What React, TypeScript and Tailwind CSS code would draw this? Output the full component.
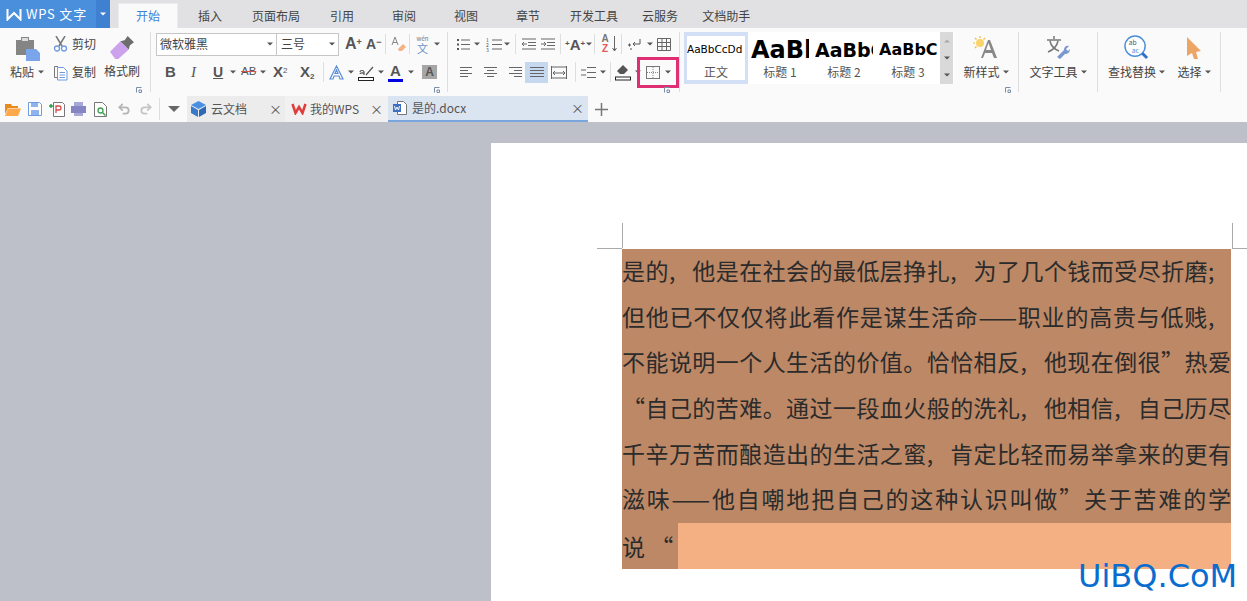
import React from "react"
import { Undo2, Redo2 } from "lucide-react"

const cjk = { fontFamily: '"Noto Sans CJK SC", sans-serif' }
const arial = { fontFamily: '"Liberation Sans", sans-serif' }
const deja = { fontFamily: '"DejaVu Sans", sans-serif' }

const Caret = ({ className = "" }: { className?: string }) => (
  <svg width="6" height="4" viewBox="0 0 6 4" className={`shrink-0 ${className}`}>
    <path d="M0 0.5h6L3 3.5z" fill="#555" />
  </svg>
)

const Sep = ({ className = "" }: { className?: string }) => (
  <div className={`w-px h-[60px] mt-[4px] bg-[#dedede] shrink-0 ${className}`} />
)

const MiniSep = ({ className = "" }: { className?: string }) => (
  <div className={`w-px h-[20px] bg-[#dedede] shrink-0 ${className}`} />
)

const Launcher = ({ className = "" }: { className?: string }) => (
  <svg width="6" height="6" viewBox="0 0 6 6" className={`absolute bottom-[3px] ${className}`}>
    <path d="M0.5 5.5V0.5H5.5M3 3h2.5v2.5H3z" fill="none" stroke="#7d8ea8" strokeWidth="1" />
  </svg>
)

const Lines = ({ rows }: { rows: [number, number][] }) => (
  <svg width="14" height="12" viewBox="0 0 14 12" className="shrink-0">
    {rows.map(([a, b], i) => (
      <path key={i} d={`M${a} ${1.5 + i * 3}H${b}`} stroke="#666" strokeWidth="1" />
    ))}
  </svg>
)

const tabs = [
  { label: "插入", cls: "ml-[20px]" },
  { label: "页面布局", cls: "ml-[30px]" },
  { label: "引用", cls: "ml-[30px]" },
  { label: "审阅", cls: "ml-[38px]" },
  { label: "视图", cls: "ml-[38px]" },
  { label: "章节", cls: "ml-[38px]" },
  { label: "开发工具", cls: "ml-[30px]" },
  { label: "云服务", cls: "ml-[24px]" },
  { label: "文档助手", cls: "ml-[24px]" },
]

const TitleBar = () => (
  <div className="flex h-[28px] bg-[#e1e1e3]">
    <div className="flex items-center w-[96px] h-full bg-[#4a8fdc] text-white">
      <svg width="16" height="13" viewBox="0 0 16 13" className="ml-[6px]">
        <path d="M1.5 1v10.5L8 5l6.5 6.5V1" fill="none" stroke="#fff" strokeWidth="2" />
      </svg>
      <span className="ml-[4px] text-[13px] tracking-[0.8px] whitespace-nowrap">WPS 文字</span>
    </div>
    <div className="flex items-center justify-center w-[14px] h-full bg-[#3f80d0]">
      <svg width="6" height="4" viewBox="0 0 6 4"><path d="M0 0.5h6L3 3.5z" fill="#fff" /></svg>
    </div>
    <div className="ml-[8px] mt-[3px] w-[60px] h-[25px] bg-[#fafafa] border border-b-0 border-[#ececec] flex items-center justify-center text-[12px] text-[#3d82d2]">
      开始
    </div>
    {tabs.map((t) => (
      <div key={t.label} className={`${t.cls} h-full flex items-center pt-[3px] text-[12px] text-[#444] whitespace-nowrap`}>
        {t.label}
      </div>
    ))}
  </div>
)

const ClipboardGroup = () => (
  <div className="relative flex w-[150px] h-[68px] shrink-0 text-[12px] text-[#444]">
    <div className="w-[52px] flex flex-col items-start">
      <svg width="26" height="26" viewBox="0 0 26 26" className="mt-[7px] ml-[15px]">
        <path d="M1 5h5V2h8v3h5v15H1z" fill="#858585" />
        <path d="M7 6V3h6v3z" fill="#ddd" />
        <path d="M11 14h10l4 4v8H11z" fill="#7ba5ea" />
      </svg>
      <div className="mt-[3px] ml-[10px] flex items-center gap-[4px] leading-[16px]">粘贴<Caret /></div>
    </div>
    <div className="w-[52px]">
      <div className="flex items-center h-[24px] mt-[4px]">
        <svg width="15" height="16" viewBox="0 0 15 16" className="ml-[1px]">
          <path d="M3 0l6 10M12 0L6 10" stroke="#777" strokeWidth="1.5" />
          <circle cx="4" cy="12.5" r="2.5" fill="none" stroke="#6f9be0" strokeWidth="1.3" />
          <circle cx="11" cy="12.5" r="2.5" fill="none" stroke="#6f9be0" strokeWidth="1.3" />
        </svg>
        <span className="ml-[4px]">剪切</span>
      </div>
      <div className="flex items-center h-[24px] mt-[4px]">
        <svg width="15" height="17" viewBox="0 0 15 17" className="ml-[1px]">
          <path d="M5 2.5H1.5v11H4" fill="none" stroke="#777" />
          <path d="M4.5 3.5h6l3.5 3.5v9h-9.5z" fill="#fff" stroke="#6f9be0" />
          <path d="M6.5 8.5h5.5M6.5 11h5.5M6.5 13.5h5.5" stroke="#6f9be0" />
        </svg>
        <span className="ml-[4px]">复制</span>
      </div>
    </div>
    <div className="flex flex-col items-center w-[36px]">
      <svg width="25" height="25" viewBox="0 0 24 24" className="mt-[7px]">
        <path d="M0 16L10 6l8 8L8 23H5z" fill="#cda2ec" />
        <path d="M10 6l4-1 3-4 6 6-4 3-1 4z" fill="#6d6d6d" />
      </svg>
      <div className="mt-[3px] leading-[16px] whitespace-nowrap">格式刷</div>
    </div>
    <Launcher className="right-[8px]" />
  </div>
)

const FontGroup = () => (
  <div className="relative w-[296px] h-[68px] shrink-0 pl-[5px] text-[#555]">
    <div className="flex items-center h-[24px] mt-[4px]">
      <div className="flex items-center w-[121px] h-[23px] bg-white border border-[#c6c6c6] pl-[3px] pr-[3px] text-[12px] text-[#444] shrink-0">
        <span className="flex-1">微软雅黑</span>
        <Caret />
      </div>
      <div className="flex items-center w-[62px] h-[23px] bg-white border border-l-0 border-[#c6c6c6] pl-[4px] pr-[3px] text-[12px] text-[#444] shrink-0">
        <span className="flex-1">三号</span>
        <Caret />
      </div>
      <span className="ml-[6px] w-[16px] text-[16px] font-bold leading-none whitespace-nowrap shrink-0" style={arial}>A<sup className="text-[9px]">+</sup></span>
      <span className="ml-[5px] w-[14px] text-[14px] font-bold leading-none whitespace-nowrap shrink-0" style={arial}>A<sup className="text-[9px]">−</sup></span>
      <MiniSep className="ml-[5px]" />
      <svg width="15" height="16" viewBox="0 0 15 16" className="ml-[5px] shrink-0">
        <path d="M1 9l3-8 3 8M2 6.5h4" fill="none" stroke="#888" />
        <path d="M7 13l5-5 3 3-4 4H8z" fill="#f4b183" />
      </svg>
      <MiniSep className="ml-[3px]" />
      <div className="ml-[4px] w-[17px] flex flex-col items-center text-[#6f8fc8] leading-none shrink-0">
        <span className="text-[6px] leading-[7px] text-[#777]">wén</span>
        <span className="text-[11px] leading-[12px]">文</span>
      </div>
      <Caret className="ml-[3px]" />
    </div>
    <div className="flex items-center h-[24px] mt-[4px] font-bold" style={arial}>
      <span className="ml-[9px] w-[10px] text-[15px] shrink-0">B</span>
      <span className="ml-[16px] w-[8px] italic font-normal text-[15px] shrink-0" style={{ fontFamily: '"Liberation Serif", serif' }}>I</span>
      <span className="ml-[14px] w-[10px] underline text-[14px] shrink-0">U</span>
      <Caret className="ml-[7px]" />
      <span className="ml-[5px] w-[16px] line-through decoration-[#d9534f] text-[11.5px] font-normal shrink-0">AB</span>
      <Caret className="ml-[3px]" />
      <span className="ml-[7px] w-[15px] text-[15px] whitespace-nowrap shrink-0">X<sup className="text-[8px] font-normal">2</sup></span>
      <span className="ml-[12px] w-[16px] text-[15px] whitespace-nowrap shrink-0">X<sub className="text-[8px]">2</sub></span>
      <MiniSep className="ml-[7px]" />
      <svg width="15" height="15" viewBox="0 0 15 15" className="ml-[5px] shrink-0">
        <path d="M1 14L7.5 1 14 14h-3l-1-3H5l-1 3zM6 8.5h3L7.5 5z" fill="#fff" stroke="#5b8ed8" strokeWidth="1.2" />
      </svg>
      <Caret className="ml-[4px]" />
      <svg width="16" height="17" viewBox="0 0 16 17" className="ml-[4px] shrink-0">
        <path d="M2 8c0-2 4-2 4 0v3M2 10c0-1.5 4-1.5 4 0M8 11l7-8" fill="none" stroke="#555" strokeWidth="1.2" />
        <rect x="0.5" y="13.5" width="15" height="3" fill="#fff" stroke="#222" />
      </svg>
      <Caret className="ml-[4px]" />
      <div className="ml-[4px] w-[15px] flex flex-col items-center leading-none shrink-0">
        <span className="text-[15px]">A</span>
        <span className="w-full h-[3px] bg-[#0000e0] mt-[1px]" />
      </div>
      <Caret className="ml-[5px]" />
      <div className="ml-[8px] w-[15px] h-[14px] bg-[#a6a6a6] flex items-center justify-center text-[12px] text-[#555] shrink-0">A</div>
    </div>
    <Launcher className="right-[7px]" />
  </div>
)

const ParagraphGroup = () => (
  <div className="relative w-[231px] h-[68px] shrink-0 text-[#555]">
    <div className="flex items-center h-[24px] mt-[4px]">
      <svg width="14" height="13" viewBox="0 0 14 13" className="ml-[8px] shrink-0">
        <path d="M5 2h9M5 6.5h9M5 11h9" stroke="#666" />
        <path d="M1 1h2v2H1zM1 5.5h2v2H1zM1 10h2v2H1z" fill="#555" />
      </svg>
      <Caret className="ml-[4px]" />
      <div className="ml-[6px] w-[5px] flex flex-col text-[5px] leading-[5px] text-[#555] shrink-0">
        <span>1</span>
        <span>2</span>
        <span>3</span>
      </div>
      <svg width="10" height="13" viewBox="0 0 10 13" className="ml-[1px] shrink-0"><path d="M0 2h10M0 6.5h10M0 11h10" stroke="#666" /></svg>
      <Caret className="ml-[2px]" />
      <MiniSep className="ml-[5px]" />
      <svg width="14" height="12" viewBox="0 0 14 12" className="ml-[6px] shrink-0">
        <path d="M0 1h14M6 4.5h8M6 7.5h8M0 11h14M5 6H0M2 4L0 6l2 2" fill="none" stroke="#666" />
      </svg>
      <svg width="14" height="12" viewBox="0 0 14 12" className="ml-[5px] shrink-0">
        <path d="M0 1h14M6 4.5h8M6 7.5h8M0 11h14M0 6h5M3 4l2 2-2 2" fill="none" stroke="#666" />
      </svg>
      <MiniSep className="ml-[5px]" />
      <span className="ml-[4px] w-[18px] text-[15px] font-bold leading-none whitespace-nowrap shrink-0" style={arial}>
        <sup className="text-[8px]">+</sup>A<sup className="text-[8px]">+</sup>
      </span>
      <Caret className="ml-[3px]" />
      <MiniSep className="ml-[2px]" />
      <div className="ml-[5px] w-[10px] flex flex-col items-center text-[10px] font-bold leading-[10px] shrink-0" style={arial}>
        <span className="text-[#777]">A</span>
        <span className="text-[#e05a5a]">Z</span>
      </div>
      <svg width="5" height="18" viewBox="0 0 5 18" className="ml-[2px] shrink-0"><path d="M2.5 1v15M0.5 13l2 3 2-3" fill="none" stroke="#666" /></svg>
      <MiniSep className="ml-[4px]" />
      <svg width="13" height="13" viewBox="0 0 13 13" className="ml-[6px] shrink-0">
        <path d="M12 1v5H5M7 4L5 6l2 2M0 7h3M1.5 5.5v3M2 11h2" fill="none" stroke="#555" />
      </svg>
      <Caret className="ml-[6px]" />
      <svg width="14" height="13" viewBox="0 0 14 13" className="ml-[4px] shrink-0">
        <path d="M0.5 0.5h13v12h-13zM0.5 4.5h13M0.5 8.5h13M5 0.5v12M9.5 0.5v12" fill="none" stroke="#666" />
      </svg>
    </div>
    <div className="flex items-center h-[24px] mt-[4px]">
      <div className="ml-[12px]"><Lines rows={[[0, 12], [0, 8], [0, 12], [0, 8]]} /></div>
      <div className="ml-[10px]"><Lines rows={[[0, 13], [3, 10], [0, 13], [3, 10]]} /></div>
      <div className="ml-[10px]"><Lines rows={[[1, 14], [6, 14], [1, 14], [6, 14]]} /></div>
      <div className="ml-[3px] w-[23px] h-[21px] bg-[#c5d8f0] flex items-center justify-center shrink-0">
        <Lines rows={[[0, 14], [0, 14], [0, 14], [0, 14]]} />
      </div>
      <svg width="16" height="13" viewBox="0 0 16 13" className="ml-[3px] shrink-0">
        <path d="M0.5 0v13M15.5 0v13M1 1h14M1 12h14M2 7h12M4 5L2 7l2 2M12 5l2 2-2 2" fill="none" stroke="#666" />
      </svg>
      <MiniSep className="ml-[8px]" />
      <svg width="15" height="13" viewBox="0 0 15 13" className="ml-[5px] shrink-0">
        <path d="M6 1.5h9M6 6.5h9M6 11.5h9M0 4h5M0 9h5" stroke="#666" />
      </svg>
      <Caret className="ml-[4px]" />
      <MiniSep className="ml-[4px]" />
      <svg width="16" height="17" viewBox="0 0 16 17" className="ml-[4px] shrink-0">
        <path d="M2 7l6-6 5 5-4 4H5z" fill="#555" />
        <rect x="0.5" y="13" width="15" height="3" fill="#fff" stroke="#222" />
      </svg>
      <Caret className="ml-[4px] -mr-[4px]" />
      <div className="w-[42px] h-[31px] -my-[4px] border-[3px] border-[#df2f72] flex items-center pl-[6px] gap-[5px] shrink-0">
        <svg width="14" height="13" viewBox="0 0 14 13" className="shrink-0">
          <rect x="0.5" y="0.5" width="13" height="12" fill="none" stroke="#777" />
          <path d="M7 1v11M1 6.5h12" stroke="#888" strokeDasharray="1 1" />
        </svg>
        <Caret />
      </div>
    </div>
    <Launcher className="right-[9px]" />
  </div>
)

const Style = ({ sample, label, cls, active }: { sample: string; label: string; cls: string; active?: boolean }) => (
  <div className={`w-[64px] h-[52px] flex flex-col items-center overflow-hidden bg-white ${active ? "border-x-[3px] border-y-[4px] border-[#d3dff5]" : ""}`}>
    <div className={`w-[58px] h-[28px] flex items-center overflow-hidden whitespace-nowrap text-black ${active ? "" : "mt-[4px]"} ${cls}`} style={deja}>
      {sample}
    </div>
    <div className="h-[16px] text-[12px] leading-[16px] text-[#555] whitespace-nowrap">{label}</div>
  </div>
)

const StylesGroup = () => (
  <div className="flex ml-[4px] mt-[4px] h-[52px] w-[270px] shrink-0 bg-white">
    <Style sample="AaBbCcDd" label="正文" cls="text-[10.5px]" active />
    <Style sample="AaBb" label="标题 1" cls="text-[24px] font-bold" />
    <Style sample="AaBbC" label="标题 2" cls="text-[19px] font-bold" />
    <Style sample="AaBbC" label="标题 3" cls="text-[16px] font-bold" />
    <div className="w-[13px] h-full bg-[#d9d9d9] flex flex-col items-center justify-around">
      <svg width="6" height="4" viewBox="0 0 6 4"><path d="M0 3.5h6L3 0.5z" fill="#aaa" /></svg>
      <Caret />
      <Caret />
    </div>
  </div>
)

const BigButton = ({ label, width, icon }: { label: string; width: string; icon: React.ReactNode }) => (
  <div className={`${width} h-[68px] flex flex-col items-center shrink-0`}>
    <div className="h-[25px] mt-[7px] flex items-center">{icon}</div>
    <div className="mt-[4px] flex items-center gap-[3px] text-[12px] leading-[16px] text-[#444] whitespace-nowrap">
      {label}
      <Caret />
    </div>
  </div>
)

const Ribbon = () => (
  <div className="flex h-[68px] bg-[#fafafa]" style={cjk}>
    <ClipboardGroup />
    <Sep />
    <FontGroup />
    <Sep />
    <ParagraphGroup />
    <Sep />
    <StylesGroup />
    <div className="relative w-[64px] shrink-0">
      <BigButton
        label="新样式"
        width="w-[64px]"
        icon={
          <svg width="26" height="24" viewBox="0 0 26 24">
            <path d="M8 22L15 4h2l7 18h-3l-2-5h-7l-2 5zM13 14h5l-2.5-7z" fill="#888" />
            <circle cx="7" cy="7" r="4" fill="#fbd36b" />
            <path d="M7 0v2M0 7h2M2 2l1.5 1.5M12 2l-1.5 1.5M2 12l1.5-1.5" stroke="#f5b83a" strokeWidth="1.2" />
          </svg>
        }
      />
      <Launcher className="right-[7px]" />
    </div>
    <Sep />
    <div className="w-[78px] shrink-0">
      <BigButton
        label="文字工具"
        width="w-[78px]"
        icon={
          <svg width="24" height="24" viewBox="0 0 24 24">
            <path d="M8 0v3M1 4h14M4 5c1 5 4 8 9 10M12 5c-1 5-5 9-10 11" fill="none" stroke="#777" strokeWidth="1.5" />
            <path d="M11 21l7-7c0-3 2-5 5-4l-3 3 2 2 2-2c0 3-2 5-5 5l-5 5z" fill="#7c97cf" />
          </svg>
        }
      />
    </div>
    <Sep />
    <BigButton
      label="查找替换"
      width="w-[77px]"
      icon={
        <svg width="25" height="25" viewBox="0 0 26 26">
          <circle cx="11.5" cy="11.5" r="10.5" fill="#fff" stroke="#4a8fdc" strokeWidth="1.5" />
          <path d="M19 19l5 5" stroke="#2f6fc4" strokeWidth="3" />
          <text x="5" y="10" fontSize="7" fill="#555">ab</text>
          <text x="8" y="19" fontSize="7" fill="#4a8fdc">ac</text>
        </svg>
      }
    />
    <div className="-ml-[3px]">
      <BigButton
        label="选择"
        width="w-[44px]"
        icon={
          <svg width="16" height="24" viewBox="0 0 16 24">
            <path d="M1 1l14 14-5 1 2 7-4 0-2-6-5 3z" fill="#eda566" />
          </svg>
        }
      />
    </div>
    <Sep className="ml-[4px]" />
  </div>
)

const QuickBar = () => (
  <div className="flex items-stretch h-[26px] bg-[#fafafa] text-[12px] text-[#555]" style={cjk}>
    <div className="flex items-center">
      <svg width="16" height="13" viewBox="0 0 16 13" className="ml-[5px]">
        <path d="M0 1h6l1 2h6v2H3L0 11z" fill="#e88a1e" />
        <path d="M3 5.5h13L13 13H0z" fill="#fba94a" />
      </svg>
      <svg width="14" height="14" viewBox="0 0 14 14" className="ml-[7px]">
        <path d="M0.5 0.5h11l2 2v11H0.5z" fill="#fff" stroke="#6f9be0" />
        <path d="M3 1h7v4H3zM3 8h8v5H3z" fill="#8fb3ee" />
      </svg>
      <svg width="16" height="15" viewBox="0 0 16 15" className="ml-[7px]">
        <path d="M4.5 0.5h9l2 2v12h-11z" fill="#fff" stroke="#777" />
        <path d="M7 11V4h3a2 2 0 010 4H7" fill="none" stroke="#d84a4a" strokeWidth="1.3" />
        <path d="M0 4h4M2 2v4" stroke="#2f9e4f" strokeWidth="1.5" />
      </svg>
      <svg width="15" height="14" viewBox="0 0 15 14" className="ml-[6px]">
        <path d="M3 0h9v4H3zM3 10h9v4H3z" fill="#a7a8d8" />
        <path d="M0 4h15v7H0z" fill="#8485c2" />
      </svg>
      <svg width="13" height="15" viewBox="0 0 13 15" className="ml-[8px]">
        <path d="M0.5 0.5h8l4 4v10h-12z" fill="#fff" stroke="#777" />
        <circle cx="6.5" cy="8.5" r="2.5" fill="none" stroke="#3ea04f" strokeWidth="1.3" />
        <path d="M8.5 10.5l3 3" stroke="#3ea04f" strokeWidth="1.5" />
      </svg>
      <Undo2 size={14} strokeWidth={3} color="#b5b5b5" className="ml-[10px]" />
      <Redo2 size={14} strokeWidth={3} color="#c5c5c5" className="ml-[8px]" />
      <div className="ml-[6px] w-px h-[22px] bg-[#dedede]" />
      <svg width="12" height="6" viewBox="0 0 12 6" className="ml-[8px]"><path d="M0 0h12L6 6z" fill="#666" /></svg>
    </div>
    <div className="ml-[7px] w-[98px] bg-[#ececec] flex items-center">
      <svg width="15" height="16" viewBox="0 0 15 16" className="ml-[4px]">
        <path d="M7.5 0L15 4 7.5 8 0 4z" fill="#4a90e2" />
        <path d="M0 5l7 4v7l-7-4z" fill="#3a78c8" />
        <path d="M15 5L8 9v7l7-4z" fill="#2f68b4" />
      </svg>
      <span className="ml-[5px]">云文档</span>
      <span className="ml-auto mr-[3px] text-[13px]">×</span>
    </div>
    <div className="w-[103px] bg-[#f1f1f1] flex items-center">
      <svg width="16" height="12" viewBox="0 0 16 12" className="ml-[6px]">
        <path d="M1.5 1l3 9 3.5-6 3.500 6 3-9" fill="none" stroke="#e23c3c" strokeWidth="2.5" />
      </svg>
      <span className="ml-[3px]">我的WPS</span>
      <span className="ml-auto mr-[5px] text-[13px]">×</span>
    </div>
    <div className="w-[200px] bg-[#dbe5f2] border-b-2 border-[#7aa5de] flex items-center">
      <svg width="14" height="14" viewBox="0 0 14 14" className="ml-[5px]">
        <path d="M4.5 0.5h6l3 3v10h-9z" fill="#fff" stroke="#777" />
        <path d="M0 3h8v8H0z" fill="#3f6fc0" />
        <path d="M1.5 5l1 4 1.5-3 1.5 3 1-4" fill="none" stroke="#fff" />
      </svg>
      <span className="ml-[5px]">是的.docx</span>
      <span className="ml-auto mr-[4px] text-[13px]">×</span>
    </div>
    <div className="ml-[7px] flex items-center">
      <svg width="13" height="13" viewBox="0 0 13 13"><path d="M6.5 0v13M0 6.5h13" stroke="#777" strokeWidth="1.5" /></svg>
    </div>
  </div>
)

const docLines = [
  "是的,他是在社会的最低层挣扎,为了几个钱而受尽折磨;",
  "但他已不仅仅将此看作是谋生活命——职业的高贵与低贱,",
  "不能说明一个人生活的价值。恰恰相反,他现在倒很”热爱",
  "“自己的苦难。通过一段血火般的洗礼,他相信,自己历尽",
  "千辛万苦而酿造出的生活之蜜,肯定比轻而易举拿来的更有",
  "滋味——他自嘲地把自己的这种认识叫做”关于苦难的学",
]

// commas and semicolons sit in the middle of their cell in the reference
const withPunct = (line: string) =>
  line.split(/([,;])/).map((part, i) =>
    part === "," || part === ";" ? (
      <span key={i} className="inline-block w-[1em] text-center">{part}</span>
    ) : (
      part
    )
  )

const Page = () => (
  <div className="relative ml-[491px] mt-[21px] h-[458px] bg-white pt-[106px] pl-[131px] overflow-hidden" style={cjk}>
    <div className="absolute left-[131px] top-[80px] w-px h-[25px] bg-[#aaa]" />
    <div className="absolute left-[106px] top-[105px] w-[25px] h-px bg-[#aaa]" />
    <div className="absolute left-[741px] top-[80px] w-px h-[25px] bg-[#aaa]" />
    <div className="absolute left-[741px] top-[105px] w-[15px] h-px bg-[#aaa]" />
    <div className="w-[609px] text-[23px] text-[#2b2b2b]">
      {docLines.map((line) => (
        <div key={line} className="h-[45.67px] leading-[43px] bg-[#bc8866] text-justify [text-align-last:justify] whitespace-nowrap">
          {withPunct(line)}
        </div>
      ))}
      <div className="flex h-[46px] leading-[46px]">
        <div className="w-[56px] bg-[#bc8866] whitespace-nowrap">说 “</div>
        <div className="flex-1 bg-[#f4b083]" />
      </div>
    </div>
    <div className="absolute left-[587px] top-[415px] text-[32px] leading-[36px] text-[#0a6ccf] whitespace-nowrap" style={deja}>
      UiBQ.CoM
    </div>
  </div>
)

export default function App() {
  return (
    <div className="w-[1247px] h-[601px] overflow-hidden bg-[#bdc0c9]" style={cjk}>
      <TitleBar />
      <Ribbon />
      <QuickBar />
      <Page />
    </div>
  )
}
